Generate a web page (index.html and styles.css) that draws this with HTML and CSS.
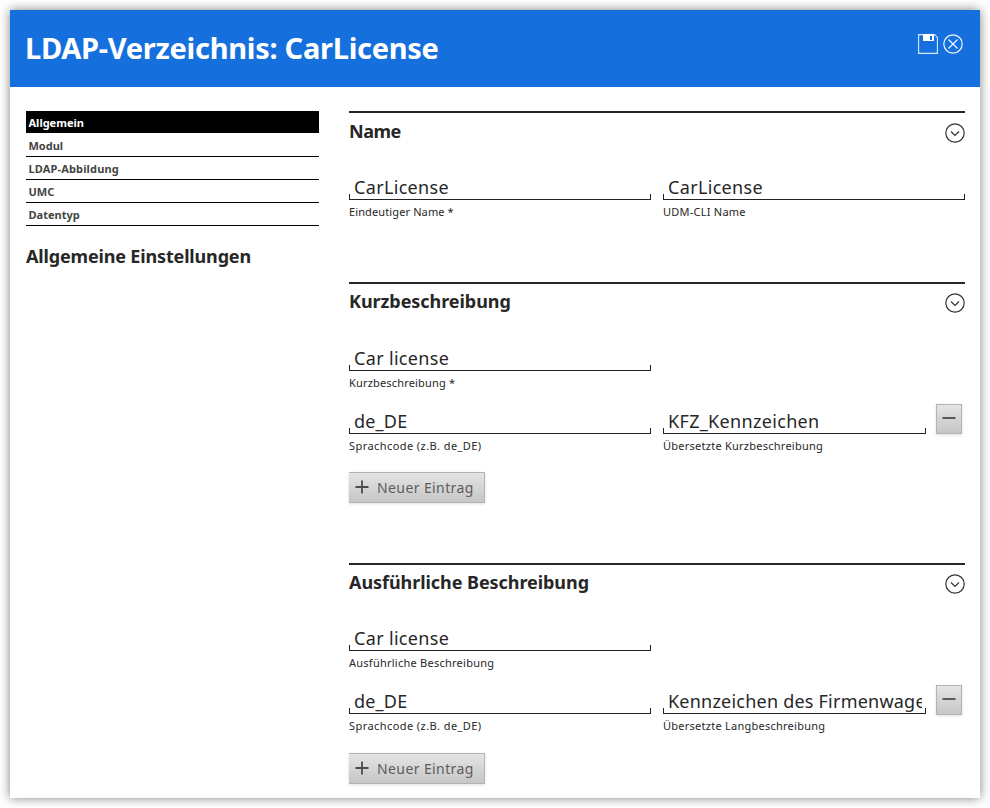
FILE: index.html
```html
<!DOCTYPE html>
<html lang="de">
<head>
<meta charset="utf-8">
<title>LDAP-Verzeichnis: CarLicense</title>
<link rel="stylesheet" href="styles.css">
</head>
<body>
<div class="window">
  <header class="titlebar">
    <h1>LDAP-Verzeichnis: CarLicense</h1>
    <div class="actions">
      <svg width="20" height="20" viewBox="0 0 20 20"><path d="M.6.6h16l2.800 2.800v16H.6z" fill="none" stroke="#d9e8ff" stroke-width="1.1"/><path d="M5 0h11v7H5zM12 2v4h2V2z" fill="#fff" fill-rule="evenodd"/></svg>
      <svg width="20" height="20" viewBox="0 0 20 20" fill="none" stroke="#eef5ff" stroke-width="1.2"><circle cx="10" cy="10" r="9.2"/><path d="M5.500 5.500l9 9M14.500 5.500l-9 9"/></svg>
    </div>
  </header>
  <div class="body">
    <aside>
      <nav class="tabs">
        <a class="tab active">Allgemein</a>
        <a class="tab">Modul</a>
        <a class="tab wide">LDAP-Abbildung</a>
        <a class="tab">UMC</a>
        <a class="tab">Datentyp</a>
      </nav>
      <h2 class="side-title">Allgemeine Einstellungen</h2>
    </aside>
    <main>
      <section class="group name-group">
        <div class="group-head"><h2>Name</h2><svg class="chev" width="20" height="20" viewBox="0 0 20 20"><circle cx="10" cy="10" r="9.2"/><path d="M6 8.500l4 4 4-4"/></svg></div>
        <div class="fields">
          <div class="row">
            <div class="field"><div class="input"><span>CarLicense</span></div><label class="l-id">Eindeutiger Name *</label></div>
            <div class="field"><div class="input"><span>CarLicense</span></div><label class="l-cli">UDM-CLI Name</label></div>
          </div>
        </div>
      </section>
      <section class="group short-group">
        <div class="group-head"><h2>Kurzbeschreibung</h2><svg class="chev" width="20" height="20" viewBox="0 0 20 20"><circle cx="10" cy="10" r="9.2"/><path d="M6 8.500l4 4 4-4"/></svg></div>
        <div class="fields">
          <div class="row">
            <div class="field"><div class="input"><span>Car license</span></div><label class="l-short">Kurzbeschreibung *</label></div>
          </div>
          <div class="row">
            <div class="field"><div class="input"><span class="v-lang">de_DE</span></div><label class="l-lang">Sprachcode (z.B. de_DE)</label></div>
            <div class="field narrow"><div class="input"><span>KFZ_Kennzeichen</span></div><label>Übersetzte Kurzbeschreibung</label></div>
            <button class="btn remove"><svg width="14" height="14" viewBox="0 0 14 14"><path d="M.5 7h13"/></svg></button>
          </div>
        </div>
        <button class="btn add"><svg width="14" height="14" viewBox="0 0 14 14"><path d="M.5 7h13M7 .5v13"/></svg><span>Neuer Eintrag</span></button>
      </section>
      <section class="group long-group">
        <div class="group-head"><h2>Ausführliche Beschreibung</h2><svg class="chev" width="20" height="20" viewBox="0 0 20 20"><circle cx="10" cy="10" r="9.2"/><path d="M6 8.500l4 4 4-4"/></svg></div>
        <div class="fields">
          <div class="row">
            <div class="field"><div class="input"><span>Car license</span></div><label>Ausführliche Beschreibung</label></div>
          </div>
          <div class="row">
            <div class="field"><div class="input"><span class="v-lang">de_DE</span></div><label class="l-lang">Sprachcode (z.B. de_DE)</label></div>
            <div class="field narrow"><div class="input"><span class="v-firm">Kennzeichen des Firmenwagens</span></div><label>Übersetzte Langbeschreibung</label></div>
            <button class="btn remove"><svg width="14" height="14" viewBox="0 0 14 14"><path d="M.5 7h13"/></svg></button>
          </div>
        </div>
        <button class="btn add"><svg width="14" height="14" viewBox="0 0 14 14"><path d="M.5 7h13M7 .5v13"/></svg><span>Neuer Eintrag</span></button>
      </section>
    </main>
  </div>
</div>
</body>
</html>
```
FILE: styles.css
```css
* { box-sizing: border-box; }
html { height: 100%; }
body {
  margin: 0; height: 100%; padding: 10px; overflow: hidden;
  background: #fff; color: #272727;
  font-family: "Noto Sans", "Open Sans", sans-serif;
}
h1, h2 { margin: 0; font-weight: 700; white-space: nowrap; }
.window { height: 788px; background: #fff; box-shadow: 0 0 10px rgba(0,0,0,.5); }
.titlebar {
  height: 77px; padding: 0 17px 0 15px; background: #156fdd; color: #fff;
  display: flex; justify-content: space-between;
}
h1 { font-size: 29px; line-height: 76px; letter-spacing: -.28px; }
h2 { font-size: 18px; letter-spacing: -.06px; }
.actions { display: flex; gap: 5px; padding-top: 24px; }
.body { display: flex; gap: 30px; padding: 24px 15px 0 16px; }
aside { width: 293px; }
.tab {
  display: block; height: 23px; padding-left: 2.5px; border-bottom: 1px solid #000;
  font-size: 11px; line-height: 24px; font-weight: 700; color: #444;
}
.wide { letter-spacing: .15px; }
.active { background: #000; background-clip: padding-box; border-color: transparent; color: #fff; }
.side-title { margin-top: 17px; line-height: 26px; letter-spacing: -.16px; }
main { width: 616px; }
.group { border-top: 2px solid #272727; }
.name-group { height: 171px; }
.short-group { height: 281px; }
.group-head { display: flex; justify-content: space-between; height: 59px; }
.group-head h2 { line-height: 36px; }
.name-group h2 { letter-spacing: -.5px; }
.short-group .group-head h2, .long-group .group-head h2 { line-height: 35px; }
.chev { margin-top: 10px; fill: none; stroke: #333; stroke-width: 1.2; }
.short-group .chev, .long-group .chev { margin-top: 9px; }
.fields { display: flex; flex-direction: column; gap: 12px; height: 127px; }
.long-group .fields { margin-top: -1px; height: 128px; }
.row { display: flex; gap: 12px; height: 51px; }
.field { width: 302px; }
.narrow { width: 263px; }
.input {
  height: 28px; padding: 0 4px 0 5px; overflow: hidden; font-size: 18px; white-space: nowrap;
  border-bottom: 1px solid #222;
  background: linear-gradient(#222,#222) left bottom/1px 5px no-repeat, linear-gradient(#222,#222) right bottom/1px 5px no-repeat;
}
.input span { display: block; overflow: hidden; line-height: 31px; height: 27px; letter-spacing: .33px; }
.input .v-lang { letter-spacing: .2px; }
.input .v-firm { letter-spacing: .22px; }
label { display: block; font-size: 11px; line-height: 24px; white-space: nowrap; letter-spacing: .25px; }
.l-id { letter-spacing: .12px; }
.l-cli { letter-spacing: .24px; }
.l-short { letter-spacing: .17px; }
.l-lang { letter-spacing: .43px; }
.btn {
  border: 1px solid #b3b3b3; background: linear-gradient(#e4e4e4,#c6c6c6); color: #5c5c5c;
  box-shadow: 0 1px 3px rgba(0,0,0,.13); font: 14px/29px "Noto Sans", sans-serif; letter-spacing: .4px; padding: 0;
}
.btn svg { fill: none; stroke: #4b4b4b; stroke-width: 1.8; margin-bottom: 2px; }
.remove { width: 26px; height: 30px; margin: -2px 0 0 -2px; display: grid; place-items: center; }
.long-group .remove { margin-top: -1px; }
.add { height: 31px; width: 136px; margin-top: 2px; border-left: 0; padding-left: 6px; display: flex; align-items: center; gap: 8px; white-space: nowrap; }
```
